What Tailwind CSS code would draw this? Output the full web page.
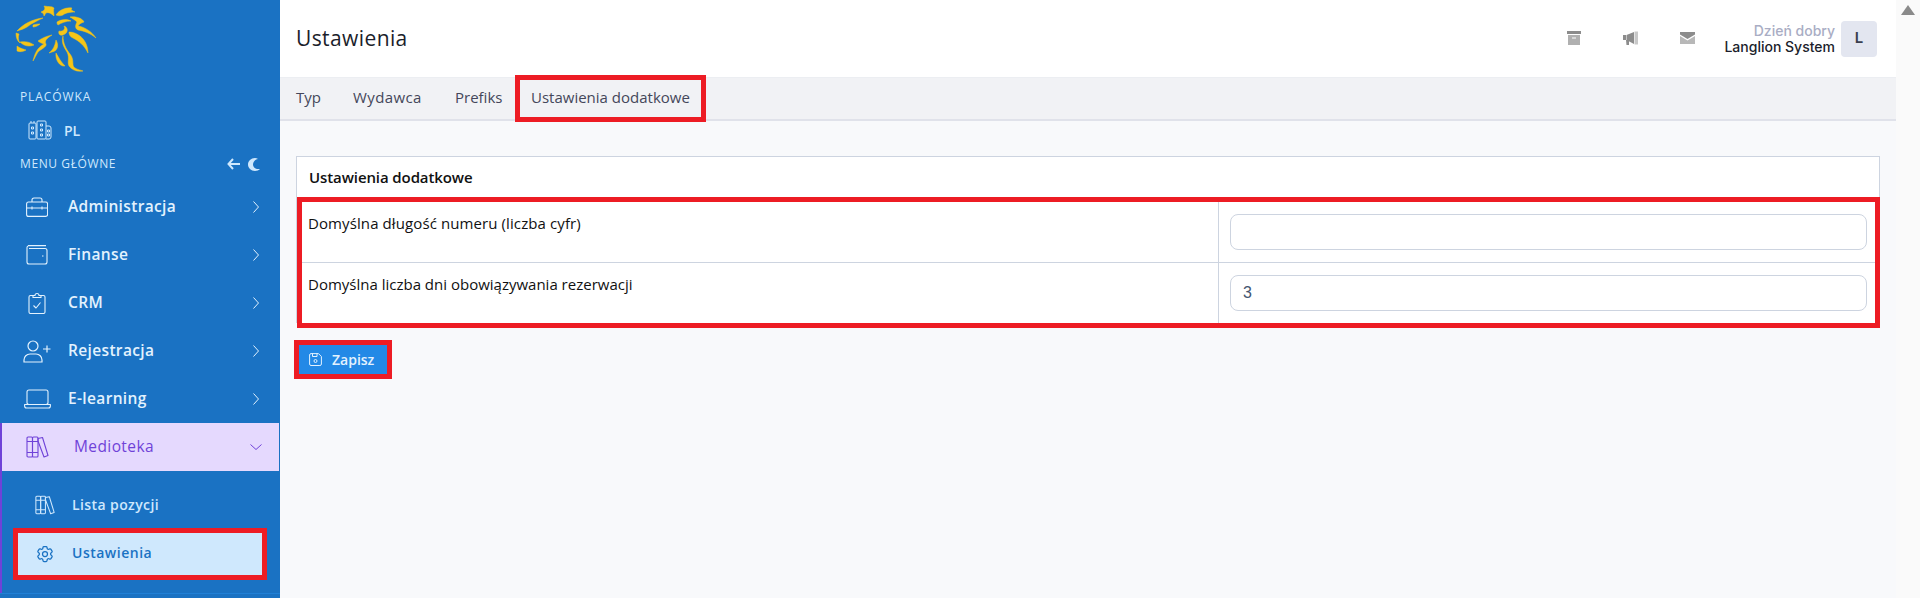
<!DOCTYPE html>
<html lang="pl">
<head>
    <meta charset="UTF-8">
    <title>Ustawienia</title>
    <script src="https://cdn.jsdelivr.net/npm/@tailwindcss/browser@4"></script>
</head>
<body class="h-[598px] overflow-hidden bg-[#f8f9fb] font-['Open_Sans',sans-serif]">
<div class="flex h-[598px]">
    <!-- Sidebar -->
    <aside class="w-[280px] shrink-0 bg-[#1a72c3] text-[#cfe8fd] flex flex-col">
        <div class="h-[80px] pl-[14px] pt-[4px]">
            <svg width="84" height="72" viewBox="14 4 84 72" fill="#f5c518" stroke="#f5c518" stroke-width="0.5" stroke-linejoin="round">
                <path d="M41 12C44 11 46 9 44 6C49 7 52 6 54 8C53 10 54 13 54 16C51 13 48 12 46 13C45 14 45 15 44 16C44 14 43 13 41 12Z"/>
                <path d="M56 15C59 10 66 7 72 8C70 10 73 11 75 12C70 12 65 13 63 15C61 16 58 16 56 15Z"/>
                <path d="M17 31C23 24 33 19 43 18C37 21 32 23 27 27C24 29 20 30 17 31Z"/>
                <path d="M33 25C36 24 38 24 40 24C38 26 35 27 33 27Z"/>
                <path d="M16 33L19 34C18 37 18 40 20 43C17 41 16 37 16 33Z"/>
                <path d="M20 42C25 41 30 42 34 45C29 47 24 46 20 42Z"/>
                <path d="M17 46C21 49 24 49 26 50C23 52 19 52 17 51Z"/>
                <path d="M33 61C35 53 37 48 44 44C41 43 39 42 38 41C42 38 47 36 52 35C47 38 44 41 46 44C47 47 41 49 38 52C36 55 35 58 33 61Z"/>
                <path d="M49 53C53 50 55 46 56 40C59 45 58 51 52 52Z"/>
                <path d="M63 36C63 43 66 49 70 54C75 60 71 66 75 68C78 70 81 70 83 71C77 72 72 70 69 66C67 62 70 58 67 52C64 47 61 43 63 36Z"/>
                <path d="M56 53C59 58 61 62 65 66C60 67 55 60 56 53Z"/>
                <path d="M59 31C63 32 66 29 64 26C68 27 69 33 63 35C60 36 58 34 59 31Z"/>
                <path d="M57 22C62 19 67 19 71 21C66 21 61 23 58 25C57 24 57 23 57 22Z"/>
                <path d="M70 17C77 16 83 19 84 22C81 23 79 24 78 26C85 27 92 32 96 38C90 33 84 31 78 30C74 28 76 24 77 22C75 20 72 18 70 17Z"/>
                <path d="M69 32C78 32 88 40 88 53C84 45 79 41 73 38C70 37 69 34 69 32Z"/>
            </svg>
        </div>
        <p class="pl-[20px] text-[12px] font-medium tracking-[0.9px] leading-[16px] mt-[9px]">PLACÓWKA</p>
        <div class="flex items-center h-[24px] mt-[13px] pl-[28px] gap-[12px]">
            <svg class="w-[24px] h-[20px]" viewBox="0 0 24 20" fill="none" stroke="currentColor" stroke-width="1"><rect x="1" y="3" width="7" height="16" rx="1"/><path d="M3 3V1M6 3V1"/><rect x="9" y="1" width="9" height="18" rx="1"/><path d="M18 6h3a2 2 0 012 2v9a2 2 0 01-2 2h-3"/><path d="M3.500 7h2v2h-2zM3.500 12h2v2h-2zM12.500 4h2v2h-2zM12.500 9h2v2h-2zM12.500 14h2v2h-2zM19.500 10h2v2h-2zM19.500 14h2v2h-2z"/></svg>
            <span class="text-[14px] font-semibold">PL</span>
        </div>
        <div class="flex items-center justify-between h-[16px] mt-[14px] pl-[20px] pr-[20px]">
            <span class="text-[12px] font-medium tracking-[0.6px]">MENU GŁÓWNE</span>
            <span class="flex items-center gap-[8px]">
                <svg class="w-[13px] h-[12px]" viewBox="0 0 13 12" fill="none" stroke="currentColor" stroke-width="2"><path d="M6 1L1.500 6L6 11M2 6H13"/></svg>
                <svg class="w-[12px] h-[13px]" viewBox="0 0 12 13" fill="currentColor"><path d="M7 0C3 0 0 3 0 6.500S3 13 7 13c2 0 4-1 5-2C8 11.500 5 9.500 5 6.500S7.500 1.500 10 1C9 .4 8 0 7 0Z"/></svg>
            </span>
        </div>
        <nav class="mt-[11px] flex flex-col text-[15.500px] font-semibold text-[#e3f2fe]">
            <a class="flex items-center h-[48px] pl-[26px] pr-[21px]">
                <svg class="w-[22px] h-[20px] mr-[20px]" viewBox="0 0 22 20" fill="none" stroke="currentColor" stroke-width="1.100" stroke-linejoin="round"><rect x="0.600" y="5" width="21" height="14.400" rx="2"/><path d="M6 5V3a2 2 0 012-2h6a2 2 0 012 2v2M1 11h20M6 9.500v3M16 9.500v3"/></svg>
                <span class="flex-1 tracking-[0.35px]">Administracja</span>
                <svg class="w-[6px] h-[12px]" viewBox="0 0 6 12" fill="none" stroke="currentColor"><path d="M.5.500L5.500 6L.5 11.500"/></svg>
            </a>
            <a class="flex items-center h-[48px] pl-[26px] pr-[21px]">
                <svg class="w-[22px] h-[20px] mr-[20px]" viewBox="0 0 22 20" fill="none" stroke="currentColor" stroke-width="1.100"><path d="M2 .6H20M3 3.500H19a2 2 0 012 2V17a2 2 0 01-2 2H3a2 2 0 01-2-2V3a2 2 0 011-2"/><path d="M16 11h1.500"/></svg>
                <span class="flex-1 tracking-[0.35px]">Finanse</span>
                <svg class="w-[6px] h-[12px]" viewBox="0 0 6 12" fill="none" stroke="currentColor"><path d="M.5.500L5.500 6L.5 11.500"/></svg>
            </a>
            <a class="flex items-center h-[48px] pl-[28px] pr-[21px]">
                <svg class="w-[18px] h-[22px] mr-[22px]" viewBox="0 0 18 22" fill="none" stroke="currentColor" stroke-width="1.100" stroke-linejoin="round"><path d="M5 3.500H2.500a1.500 1.500 0 00-1.500 1.500V20a1.500 1.500 0 001.500 1.500h13A1.500 1.500 0 0017 20V5a1.500 1.500 0 00-1.500-1.500H13"/><path d="M5 5.500V3.500H7a2 2 0 014 0h2V5.500Z"/><path d="M5.500 13.500L8 16L12.500 10.500"/></svg>
                <span class="flex-1 tracking-[0.35px]">CRM</span>
                <svg class="w-[6px] h-[12px]" viewBox="0 0 6 12" fill="none" stroke="currentColor"><path d="M.5.500L5.500 6L.5 11.500"/></svg>
            </a>
            <a class="flex items-center h-[48px] pl-[23px] pr-[21px]">
                <svg class="w-[28px] h-[23px] mr-[17px]" viewBox="0 0 28 23" fill="none" stroke="currentColor" stroke-width="1.200"><circle cx="10" cy="6" r="5"/><path d="M1 22v-2a6 6 0 016-6h6a6 6 0 016 6v2ZM20 9h7.500M24 5.500v7"/></svg>
                <span class="flex-1 tracking-[0.35px]">Rejestracja</span>
                <svg class="w-[6px] h-[12px]" viewBox="0 0 6 12" fill="none" stroke="currentColor"><path d="M.5.500L5.500 6L.5 11.500"/></svg>
            </a>
            <a class="flex items-center h-[48px] pl-[24px] pr-[21px]">
                <svg class="w-[27px] h-[20px] mr-[17px]" viewBox="0 0 27 20" fill="none" stroke="currentColor" stroke-width="1.100" stroke-linejoin="round"><rect x="3" y="1" width="21" height="14.500" rx="2"/><path d="M.6 15.500H26.400V17a2 2 0 01-2 2H2.600a2 2 0 01-2-2Z"/></svg>
                <span class="flex-1 tracking-[0.35px]">E-learning</span>
                <svg class="w-[6px] h-[12px]" viewBox="0 0 6 12" fill="none" stroke="currentColor"><path d="M.5.500L5.500 6L.5 11.500"/></svg>
            </a>
            <!-- Medioteka open -->
            <div class="border-l-2 border-[#6f42d8] h-[170px] mr-[1px]">
                <a class="flex items-center h-[48px] bg-[#e5d9fe] text-[#6f42d8] pl-[24px] pr-[17px] font-medium">
                    <svg class="w-[23px] h-[22px] mr-[25px]" viewBox="0 0 23 22" fill="none" stroke="currentColor" stroke-width="1.100" stroke-linejoin="round"><rect x="1" y="1" width="5.500" height="20" rx="1"/><rect x="6.500" y="1" width="5.500" height="20" rx="1"/><path d="M12 2.500L16.500 1.500L22 19.500L18 21L12 5ZM1 5.500H12M1 16.500H12"/></svg>
                    <span class="flex-1 tracking-[0.4px]">Medioteka</span>
                    <svg class="w-[12px] h-[6px]" viewBox="0 0 12 6" fill="none" stroke="currentColor"><path d="M.5.500L6 5.500L11.500 .5"/></svg>
                </a>
                <div class="pt-[13px] text-[14px] pl-[16px] pr-[17px]">
                    <a class="flex items-center h-[42px] pl-[17px] text-[#cfe8fd]">
                        <svg class="w-[20px] h-[20px] mr-[17px]" viewBox="0 0 23 22" fill="none" stroke="currentColor" stroke-width="1.200" stroke-linejoin="round"><rect x="1" y="1" width="5.500" height="20" rx="1"/><rect x="6.500" y="1" width="5.500" height="20" rx="1"/><path d="M12 2.500L16.500 1.500L22 19.500L18 21L12 5ZM1 5.500H12M1 16.500H12"/></svg>
                        <span class="tracking-[0.4px] pb-[2px]">Lista pozycji</span>
                    </a>
                    <a class="flex items-center h-[42px] mt-[7px] pl-[17px] bg-[#cfe8fd] text-[#1a72c3] outline-[5px] outline-[#ed1c24]">
                        <svg class="w-[20px] h-[20px] mr-[17px]" viewBox="0 0 24 24" fill="none" stroke="currentColor" stroke-width="1.500" stroke-linecap="round" stroke-linejoin="round"><path d="M9.594 3.940c.09-.542.560-.94 1.110-.94h2.593c.550 0 1.020.398 1.110.940l.213 1.281c.063.374.313.686.645.870.074.040.147.083.220.127.324.196.720.257 1.075.124l1.217-.456a1.125 1.125 0 011.370.490l1.296 2.247a1.125 1.125 0 01-.260 1.431l-1.003.827c-.293.240-.438.613-.431.992a6.759 6.759 0 010 .255c-.007.378.138.750.430.990l1.005.828c.424.350.534.954.260 1.430l-1.298 2.247a1.125 1.125 0 01-1.369.491l-1.217-.456c-.355-.133-.750-.072-1.076.124a6.570 6.570 0 01-.220.128c-.331.183-.581.495-.644.869l-.213 1.280c-.090.543-.560.941-1.110.941h-2.594c-.550 0-1.020-.398-1.110-.940l-.213-1.281c-.062-.374-.312-.686-.644-.870a6.520 6.520 0 01-.220-.127c-.325-.196-.720-.257-1.076-.124l-1.217.456a1.125 1.125 0 01-1.369-.490l-1.297-2.247a1.125 1.125 0 01.260-1.431l1.004-.827c.292-.240.437-.613.430-.992a6.932 6.932 0 010-.255c.007-.378-.138-.750-.430-.990l-1.004-.828a1.125 1.125 0 01-.260-1.430l1.297-2.247a1.125 1.125 0 011.370-.491l1.216.456c.356.133.751.072 1.076-.124.072-.044.146-.087.220-.128.332-.183.582-.495.644-.869l.214-1.281Z"/><path d="M15 12a3 3 0 11-6 0 3 3 0 016 0Z"/></svg>
                        <span class="tracking-[0.5px] pb-[4px]">Ustawienia</span>
                    </a>
                </div>
            </div>
            <div class="h-[1px] bg-[#2080d6]"></div>
        </nav>
    </aside>

    <!-- Main -->
    <div class="flex-1 min-w-0 flex flex-col">
        <header class="h-[77px] bg-white flex items-center justify-between pl-[16px] pr-[19px] shrink-0">
            <h1 class="text-[21px] font-medium text-[#1b1e2b] tracking-[0.4px]">Ustawienia</h1>
            <div class="flex items-center font-['Inter',sans-serif]">
                <svg class="w-[14px] h-[14px] mr-[42px] mb-[2px]" viewBox="0 0 14 14" fill="#b0b0b0"><rect width="14" height="3" fill="#8c8c8c"/><path d="M1 4h12v10H1ZM5 6.500v1h4v-1Z" fill-rule="evenodd"/></svg>
                <svg class="w-[15px] h-[14px] mr-[42px] mb-[2px]" viewBox="0 0 15 14" fill="#8c8c8c"><path d="M0 4h3l0 5H0ZM3.500 4L11 1v12L3.500 9Z"/><path d="M11.500 .5H15V13.500H11.500Z" fill="#c8c8c8"/><path d="M3 9h3v5H3.500Z"/></svg>
                <svg class="w-[15px] h-[12px] mr-[29px] mb-[2px]" viewBox="0 0 15 12" fill="#b8b8b8"><path d="M0 4L7.500 8.500L15 4V12H0Z"/><path d="M0 0H15V2.500L7.500 7L0 2.500Z" fill="#8c8c8c"/></svg>
                <div class="text-right text-[14px] leading-[16px] font-medium mr-[6px]">
                    <p class="text-[#a9adc4]">Dzień dobry</p>
                    <p class="text-[#1b1e2b]">Langlion System</p>
                </div>
                <div class="w-[36px] h-[36px] rounded-[4px] bg-[#e3e6f0] flex items-center justify-center text-[15px] font-semibold text-[#3a3f4f]">L</div>
            </div>
        </header>
        <div class="h-[44px] shrink-0 bg-[#f1f2f5] border-t border-[#eceef2] border-b-2 border-b-[#e0e2ea] flex items-center pl-[16px] text-[15px] text-[#44475a]">
            <a class="w-[57px] pb-[2px]">Typ</a>
            <a class="w-[102px] pb-[2px] tracking-[0.4px]">Wydawca</a>
            <a class="w-[65px] pb-[2px]">Prefiks</a>
            <a class="h-[37px] w-[181px] pl-[11px] pb-[2px] flex items-center outline-[5px] outline-[#ed1c24]">Ustawienia dodatkowe</a>
        </div>
        <main class="pt-[35px] pl-[16px] pr-[16px] text-[15px]">
            <section class="bg-white border border-[#cdd4e0] border-b-0">
                <div class="h-[40px] flex items-center pl-[12px] pt-[1px] font-semibold text-[#111] tracking-[-0.1px]">Ustawienia dodatkowe</div>
                <div class="mt-[5px] outline-[5px] outline-[#ed1c24] ml-[5px] mr-[4px] mb-[5px]">
                    <div class="h-[61px] flex border-b border-[#cdd4e0]">
                        <div class="flex-1 pl-[6px] pt-[10px] text-[#111] tracking-[0.1px]">Domyślna długość numeru (liczba cyfr)</div>
                        <div class="w-[657px] border-l border-[#cdd4e0] pl-[11px] pr-[8px] pt-[12px]">
                            <input type="text" class="block w-full h-[36px] rounded-[8px] border border-[#cdd4e0] bg-white px-[12px] text-[16px] text-[#44556f] font-['Liberation_Sans',sans-serif]">
                        </div>
                    </div>
                    <div class="h-[60px] flex">
                        <div class="flex-1 pl-[6px] pt-[10px] text-[#111]">Domyślna liczba dni obowiązywania rezerwacji</div>
                        <div class="w-[657px] border-l border-[#cdd4e0] pl-[11px] pr-[8px] pt-[12px]">
                            <input type="text" value="3" class="block w-full h-[36px] rounded-[8px] border border-[#cdd4e0] bg-white px-[12px] text-[16px] text-[#44556f] font-['Liberation_Sans',sans-serif]">
                        </div>
                    </div>
                </div>
            </section>
            <button class="mt-[22px] ml-[3px] h-[29px] w-[88px] pl-[10px] bg-[#2389e6] text-[#e3f2fe] font-semibold text-[14px] flex items-center gap-[10px] outline-[5px] outline-[#ed1c24]">
                <svg class="w-[13px] h-[13px]" viewBox="0 0 13 13" fill="none" stroke="currentColor" stroke-width="1"><path d="M2 .6H9.500L12.400 3.500V11a1.500 1.500 0 01-1.500 1.500H2A1.500 1.500 0 01.6 11V2A1.500 1.500 0 012 .6Z"/><path d="M3.500 .6V3.500H8V.6"/><circle cx="6.500" cy="8" r="1.500"/></svg>
                Zapisz
            </button>
        </main>
    </div>

    <!-- Scrollbar -->
    <div class="w-[24px] shrink-0 bg-[#fafafa] flex justify-center pt-[5px]">
        <div class="w-0 h-0 border-x-[7px] border-x-transparent border-b-[10px] border-b-[#8a8a8a]"></div>
    </div>
</div>
</body>
</html>
